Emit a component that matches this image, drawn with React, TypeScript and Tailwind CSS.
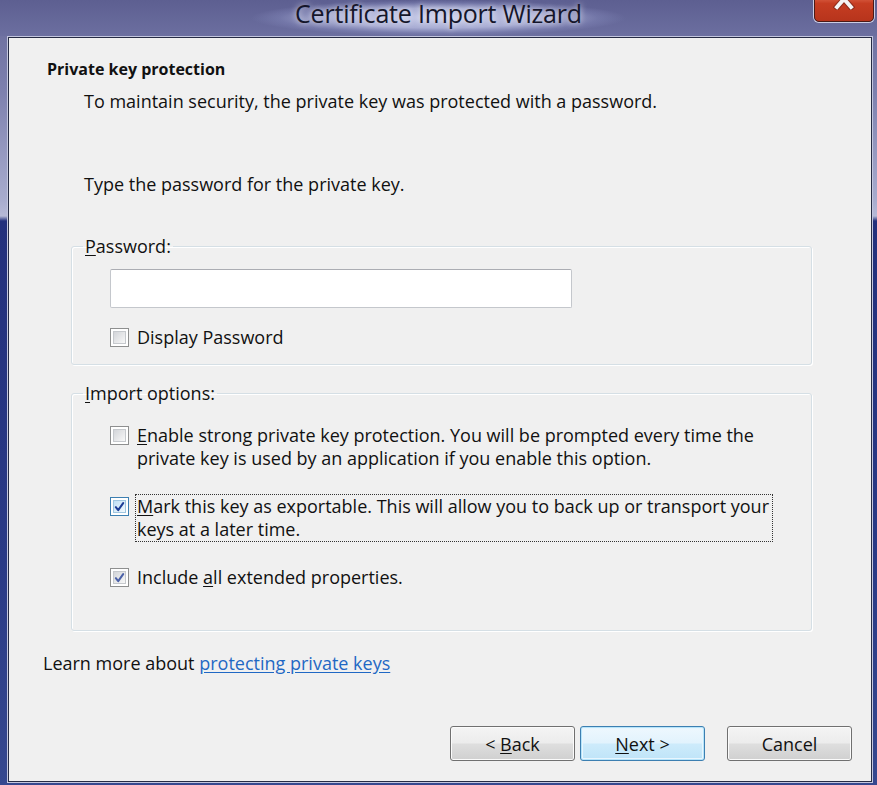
import React from "react";

function Check({ checked, focus }: { checked?: boolean; focus?: boolean }) {
  return (
    <div
      className={`w-[19px] h-[19px] shrink-0 border ${
        focus ? "border-[#3c7fb1]" : "border-[#8e8f8f]"
      } bg-white p-[2px]`}
    >
      <div
        className={`w-full h-full flex items-center justify-center border ${
          focus
            ? "border-[#9fc6e0] bg-linear-to-br from-[#bfe0f5] to-[#f2f9fd]"
            : "border-[#c6c9cd] bg-linear-to-br from-[#d3d5d9] to-[#f8f8f8]"
        }`}
      >
        {checked && (
          <svg width="12" height="12" viewBox="0 0 12 12">
            <path
              d="M2 6.2 L4.6 9.4 L10 1.8"
              fill="none"
              stroke={focus ? "#1b3c96" : "#4b61a8"}
              strokeWidth="2.2"
              strokeLinecap="round"
              strokeLinejoin="round"
            />
          </svg>
        )}
      </div>
    </div>
  );
}

export default function App() {
  return (
    <div className="w-[877px] h-[785px] overflow-hidden flex flex-col font-['Open_Sans',sans-serif] text-[#111] bg-[linear-gradient(180deg,#686a9a_0px,#7d80ae_90px,#a8acce_200px,#b6b9d6_216px,#23307c_221px,#2a3a86_560px,#36488f_785px)]">
      {/* Title bar */}
      <div className="h-[36px] shrink-0 grid grid-cols-[1fr_auto_1fr] items-start bg-[linear-gradient(180deg,#5d5f91_0%,#6c6fa0_100%)]">
        <div />
        <div className="h-[36px] px-[44px] bg-[radial-gradient(ellipse_closest-side_at_center,rgba(208,212,240,0.9)_0%,rgba(190,195,230,0.75)_55%,rgba(140,145,195,0.35)_85%,rgba(110,113,160,0)_100%)]">
          <h1 className="block text-[25px] font-normal leading-[32px] -mt-[3px] text-[#15162a] tracking-[-0.2px] [text-shadow:0_0_6px_rgba(255,255,255,0.8)]">
            Certificate Import Wizard
          </h1>
        </div>
        <div className="flex justify-end pr-[3px]">
          <div className="w-[60px] h-[48px] -mt-[26px] rounded-[5px] border border-[#4a1a17] shadow-[0_0_0_1px_rgba(230,230,245,0.8)] bg-[linear-gradient(180deg,#f0a08a_0%,#e06a50_45%,#c63d22_62%,#b7341c_100%)] flex items-center justify-center">
            <svg width="22" height="22" viewBox="0 0 22 22" className="mt-[2px]">
              <path
                d="M4 3 L18 19 M18 3 L4 19"
                stroke="#5a1a12"
                strokeWidth="6"
                strokeLinecap="square"
                opacity="0.5"
              />
              <path
                d="M4 3 L18 19 M18 3 L4 19"
                stroke="#f4f4f4"
                strokeWidth="4"
                strokeLinecap="square"
              />
            </svg>
          </div>
        </div>
      </div>

      {/* Content */}
      <div className="flex-1 ml-[8px] mr-[5px] mb-[3px] mt-[1px] bg-[#f0f0f0] border border-[#262b44] shadow-[0_0_0_1px_#c3c6de] flex flex-col text-[18px]">
        <div className="pl-[38px] pt-[21px] text-[16px] font-bold leading-[20px]">
          Private key protection
        </div>
        <div className="pl-[75px] mt-[10px] leading-[24px]">
          To maintain security, the private key was protected with a password.
        </div>
        <div className="pl-[75px] mt-[59px] leading-[24px]">
          Type the password for the private key.
        </div>

        {/* Password group */}
        <fieldset className="ml-[62px] w-[741px] mt-[38px] border border-[#d5dfe5] rounded-[3px] shadow-[inset_1px_1px_0_#fff,1px_1px_0_#fff] pl-[38px] pb-[15px]">
          <legend className="-ml-[27px] px-[2px] leading-[24px]">
            <u className="underline-offset-2">P</u>assword:
          </legend>
          <div className="mt-[11px] w-[462px] h-[39px] bg-white border border-[#c4c7cc] border-t-[#abadb3] rounded-[2px]" />
          <div className="mt-[17px] flex items-center gap-[8px] leading-[24px]">
            <Check />
            <span>Display Password</span>
          </div>
        </fieldset>

        {/* Import options */}
        <fieldset className="ml-[62px] w-[741px] mt-[16px] border border-[#d5dfe5] rounded-[3px] shadow-[inset_1px_1px_0_#fff,1px_1px_0_#fff] pl-[38px] pb-[41px]">
          <legend className="-ml-[27px] px-[2px] leading-[24px]">
            <u className="underline-offset-2">I</u>mport options:
          </legend>
          <div className="mt-[19px] flex items-start gap-[8px] leading-[23px] whitespace-nowrap">
            <div className="mt-[2px]">
              <Check />
            </div>
            <span>
              <u className="underline-offset-2">E</u>nable strong private key protection. You will be prompted every time the
              <br />
              private key is used by an application if you enable this option.
            </span>
          </div>
          <div className="mt-[24px] flex items-start gap-[6px] leading-[23px] whitespace-nowrap">
            <div className="mt-[3px]">
              <Check checked focus />
            </div>
            <span className="w-[638px] border border-dotted border-[#333] pl-[1px]">
              <u className="underline-offset-2">M</u>ark this key as exportable. This will allow you to back up or transport your
              <br />
              keys at a later time.
            </span>
          </div>
          <div className="mt-[24px] flex items-start gap-[8px] leading-[23px]">
            <div className="mt-[2px]">
              <Check checked />
            </div>
            <span>
              Include <u className="underline-offset-2">a</u>ll extended properties.
            </span>
          </div>
        </fieldset>

        <div className="pl-[34px] mt-[20px] leading-[24px]">
          Learn more about{" "}
          <span className="text-[#1f68c4] underline underline-offset-2">protecting private keys</span>
        </div>

        <div className="mt-auto mb-[20px] mr-[19px] flex justify-end">
          <button className="w-[125px] h-[35px] rounded-[3px] border border-[#707070] bg-[linear-gradient(180deg,#f4f4f4_0%,#ececec_48%,#dedede_52%,#d0d0d0_100%)] shadow-[inset_0_0_0_1px_#fbfbfb] text-[18px] leading-none">
            &lt; <u className="underline-offset-2">B</u>ack
          </button>
          <button className="ml-[5px] w-[125px] h-[35px] rounded-[3px] border border-[#3c7fb1] bg-[linear-gradient(180deg,#eef8fe_0%,#e2f3fd_48%,#cdebfb_52%,#bfe4f8_100%)] shadow-[inset_0_0_0_1px_#b6e4fa,inset_0_0_0_2px_#e8f6fe] text-[18px] leading-none">
            <u className="underline-offset-2">N</u>ext &gt;
          </button>
          <button className="ml-[22px] w-[125px] h-[35px] rounded-[3px] border border-[#707070] bg-[linear-gradient(180deg,#f4f4f4_0%,#ececec_48%,#dedede_52%,#d0d0d0_100%)] shadow-[inset_0_0_0_1px_#fbfbfb] text-[18px] leading-none">
            Cancel
          </button>
        </div>
      </div>
    </div>
  );
}
